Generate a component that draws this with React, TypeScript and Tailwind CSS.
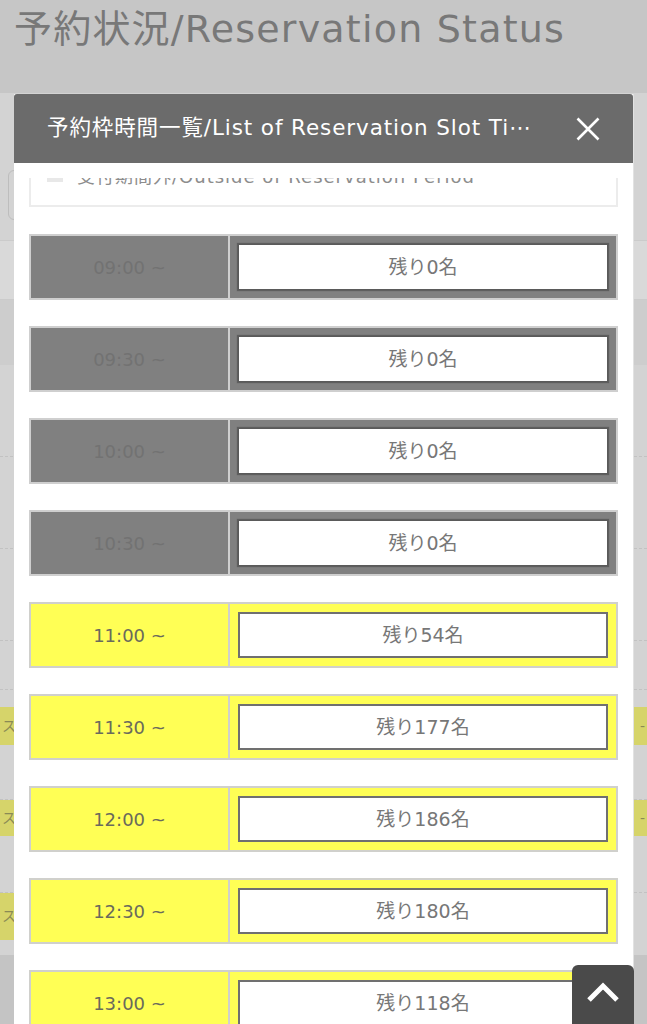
import { useState } from "react";

type Slot = { time: string; left: number; open: boolean };

const slots: Slot[] = [
    { time: "09:00 ~", left: 0, open: false },
    { time: "09:30 ~", left: 0, open: false },
    { time: "10:00 ~", left: 0, open: false },
    { time: "10:30 ~", left: 0, open: false },
    { time: "11:00 ~", left: 54, open: true },
    { time: "11:30 ~", left: 177, open: true },
    { time: "12:00 ~", left: 186, open: true },
    { time: "12:30 ~", left: 180, open: true },
    { time: "13:00 ~", left: 118, open: true },
];

function SlotRow({ slot }: { slot: Slot }) {
    const dark = !slot.open;
    return (
        <div className={`flex h-[66px] border-2 ${dark ? "bg-[#808080] border-[#cfcfcf]" : "bg-[#ffff55] border-[#d0d0cc]"}`}>
            <div className={`w-[199px] shrink-0 flex items-center justify-center border-r-2 ${dark ? "border-[#cfcfcf] text-[#727272]" : "border-[#d0d0cc] text-[#6a6a5c]"} text-[18px]`}>
                {slot.time}
            </div>
            <div className="flex-1 p-[8px]">
                <div className={`h-full bg-white flex items-center justify-center text-[19px] text-[#777] ${dark ? "border border-[#5a5a5a] shadow-[0_0_1px_1px_rgba(60,60,60,0.5)]" : "border-2 border-[#707070]"}`}>
                    残り{slot.left}名
                </div>
            </div>
        </div>
    );
}

function Backdrop() {
    return (
        <div className="flex flex-col h-full bg-[#d3d3d3]">
            <div className="h-[93px] shrink-0 bg-[#c6c6c6] px-[14px] pt-[3px]">
                <h1 className="text-[38px] leading-[52px] tracking-[1.2px] text-[#787878] whitespace-nowrap">予約状況/Reservation Status</h1>
            </div>
            <div className="h-[147px] shrink-0" />
            <div className="h-[60px] shrink-0 bg-[#d9d9d9] border-y border-[#cbcbcb]" />
            <div className="h-[65px] shrink-0 bg-[#cdcdcd]" />
            <div className="h-[92px] shrink-0 border-b border-dashed border-[#c2c2c2]" />
            <div className="h-[92px] shrink-0 border-b border-dashed border-[#c2c2c2]" />
            <div className="h-[92px] shrink-0 border-b border-dashed border-[#c2c2c2]" />
            <div className="h-[49px] shrink-0 border-b border-dashed border-[#c2c2c2]" />
            <div className="h-[17px] shrink-0" />
            <div className="h-[38px] shrink-0 bg-[#d6d46a] flex items-center justify-between px-[2px] text-[#8a8a55] text-[14px]">
                <span>ス</span>
                <span>-</span>
            </div>
            <div className="h-[55px] shrink-0 border-b border-dashed border-[#c2c2c2]" />
            <div className="h-[36px] shrink-0 bg-[#d6d46a] flex items-center justify-between px-[2px] text-[#8a8a55] text-[14px]">
                <span>ス</span>
                <span>-</span>
            </div>
            <div className="h-[57px] shrink-0 border-b border-dashed border-[#c2c2c2]" />
            <div className="h-[47px] shrink-0 w-[40px] bg-[#d6d46a] flex items-center px-[2px] text-[#8a8a55] text-[14px]">
                <span>ス</span>
            </div>
            <div className="h-[15px] shrink-0" />
            <div className="flex-1 bg-[#c4c4c4]" />
        </div>
    );
}

export default function App() {
    const [open] = useState(true);

    return (
        <div className="relative w-[647px] h-[1024px] overflow-hidden font-['DejaVu_Sans','Noto_Sans_CJK_JP',sans-serif]">
            <Backdrop />
            <div className="absolute left-[8px] top-[170px] w-[12px] h-[50px] rounded-l-[6px] border border-[#bdbdbd]" />
            {open && (
                <div className="absolute left-[14px] top-[94px] w-[620px] h-[940px] bg-white border-r border-[#e2e2e2] flex flex-col">
                    <div className="h-[69px] shrink-0 bg-[#6b6b6b] rounded-t-[3px] flex items-center pl-[33px] pr-[33px]">
                        <p className="flex-1 text-white text-[21.5px] tracking-[0.9px] whitespace-nowrap overflow-hidden">
                            予約枠時間一覧/List of Reservation Slot Ti⋯
                        </p>
                        <svg width="24" height="24" viewBox="0 0 24 24" className="shrink-0">
                            <path d="M1.5 1.5 L22.5 22.5 M22.5 1.5 L1.5 22.5" stroke="white" strokeWidth="2.6" />
                        </svg>
                    </div>
                    <div className="flex-1 flex flex-col px-[15px] pt-[15px] min-h-0">
                        <div className="flex-1 overflow-hidden">
                            <div className="-mt-[51px] h-[80px] border-2 border-[#ececec] flex items-end pb-[19px] px-[16px] gap-[14px]">
                                <span className="w-[16px] h-[10px] mb-[4px] bg-[#e8e8e8]" />
                                <span className="text-[18px] leading-[18px] tracking-[1px] text-[#8d8d8d] whitespace-nowrap">受付期間外/Outside of Reservation Period</span>
                            </div>
                            <div className="mt-[27px] flex flex-col gap-[26px]">
                                {slots.map((s) => (
                                    <SlotRow key={s.time} slot={s} />
                                ))}
                            </div>
                        </div>
                    </div>
                </div>
            )}
            <button className="absolute left-[572px] top-[965px] w-[62px] h-[70px] bg-[#4a4a4a] rounded-t-[6px] flex items-start justify-center pt-[16px]">
                <svg width="36" height="22" viewBox="0 0 36 22">
                    <path d="M4 19 L18 5 L32 19" stroke="white" strokeWidth="5" fill="none" />
                </svg>
            </button>
        </div>
    );
}
